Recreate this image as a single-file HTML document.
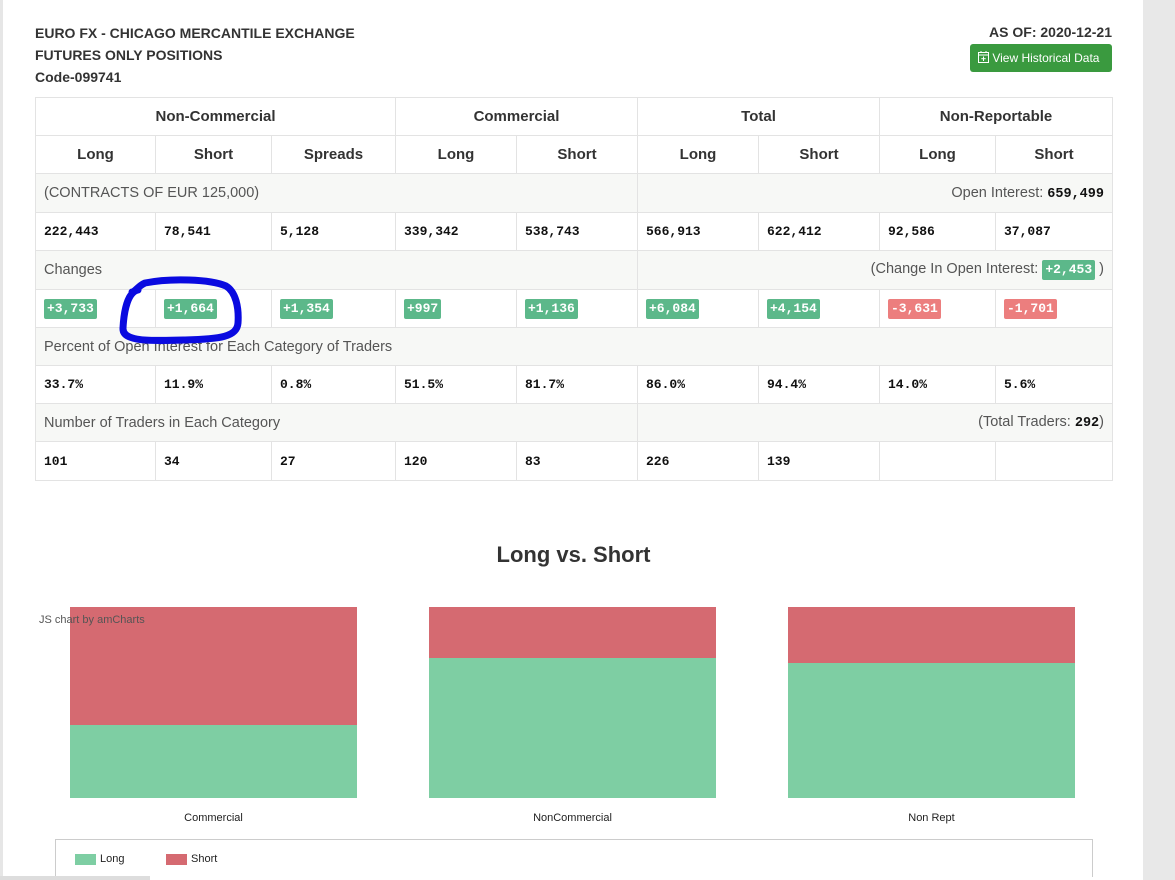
<!DOCTYPE html>
<html><head><meta charset="utf-8"><style>
*{box-sizing:border-box;margin:0;padding:0}
body{width:1175px;height:880px;background:#fff;position:relative;overflow:hidden;font-family:"Liberation Sans",sans-serif;color:#333}
.lstrip{position:absolute;left:0;top:0;width:3px;height:880px;background:#e6e6e6}
.rstrip{position:absolute;left:1143px;top:0;width:32px;height:880px;background:#e8e8e8}
.hdr{position:absolute;left:35px;top:22px;font-weight:bold;font-size:14px;line-height:22px;color:#333}
.asof{position:absolute;right:63px;top:22px;font-weight:bold;font-size:14px;line-height:20px}
.btn{position:absolute;left:970px;top:44px;width:142px;height:28px;background:#3a9a3f;border-radius:3px;color:#fff;font-size:12px;line-height:28px;padding-left:8px}
table{position:absolute;left:35px;top:97px;border-collapse:collapse;table-layout:fixed;width:1078px}
td,th{border:1px solid #e3e3e3;font-size:15px}
th{font-weight:bold;text-align:center;color:#333}
tr.h1{height:38px}tr.h2{height:38px}
tr.g{background:#f7f8f6}
tr.g td{color:#555;padding:0 8px;font-size:14.5px}
tr.n td{font-family:"Liberation Mono",monospace;font-weight:bold;font-size:13px;color:#111;padding-left:8px}
.b{display:inline-block;color:#fff;font-family:"Liberation Mono",monospace;font-weight:bold;font-size:13px;padding:0 3px;line-height:20px;border-radius:2px}
.gr{background:#5cb88a}.rd{background:#ec7e7e}
.r{text-align:right}
.mono{font-family:"Liberation Mono",monospace;font-weight:bold;color:#111;font-size:13.5px}
.title{position:absolute;left:0;width:1147px;top:542px;text-align:center;font-size:22px;font-weight:bold;color:#333}
.bar{position:absolute;width:287px}
.lbl{position:absolute;top:812px;font-size:11px;color:#222;width:287px;text-align:center}
</style></head><body>
<div class="lstrip"></div><div class="rstrip"></div>
<div class="hdr">EURO FX - CHICAGO MERCANTILE EXCHANGE<br>FUTURES ONLY POSITIONS<br>Code-099741</div>
<div class="asof">AS OF: 2020-12-21</div>
<div class="btn"><svg width="11" height="12" viewBox="0 0 11 12" style="vertical-align:-1px"><rect x="0.5" y="1.5" width="10" height="10" fill="none" stroke="#fff"/><line x1="0.5" y1="4" x2="10.5" y2="4" stroke="#fff"/><line x1="3" y1="0" x2="3" y2="2" stroke="#fff"/><line x1="8" y1="0" x2="8" y2="2" stroke="#fff"/><line x1="5.5" y1="5.5" x2="5.5" y2="10" stroke="#fff"/><line x1="3.3" y1="7.7" x2="7.7" y2="7.7" stroke="#fff"/></svg> View Historical Data</div>
<table>
<colgroup><col style="width:120px"><col style="width:116px"><col style="width:124px"><col style="width:121px"><col style="width:121px"><col style="width:121px"><col style="width:121px"><col style="width:116px"><col style="width:117px"></colgroup>
<tr class="h1"><th colspan="3">Non-Commercial</th><th colspan="2">Commercial</th><th colspan="2">Total</th><th colspan="2">Non-Reportable</th></tr>
<tr class="h2"><th>Long</th><th>Short</th><th>Spreads</th><th>Long</th><th>Short</th><th>Long</th><th>Short</th><th>Long</th><th>Short</th></tr>
<tr class="g" style="height:39px"><td colspan="5">(CONTRACTS OF EUR 125,000)</td><td colspan="4" class="r">Open Interest: <span class="mono">659,499</span></td></tr>
<tr class="n" style="height:38px"><td>222,443</td><td>78,541</td><td>5,128</td><td>339,342</td><td>538,743</td><td>566,913</td><td>622,412</td><td>92,586</td><td>37,087</td></tr>
<tr class="g" style="height:39px"><td colspan="5">Changes</td><td colspan="4" class="r">(Change In Open Interest: <span class="b gr">+2,453</span> )</td></tr>
<tr class="n" style="height:38px"><td><span class="b gr">+3,733</span></td><td><span class="b gr">+1,664</span></td><td><span class="b gr">+1,354</span></td><td><span class="b gr">+997</span></td><td><span class="b gr">+1,136</span></td><td><span class="b gr">+6,084</span></td><td><span class="b gr">+4,154</span></td><td><span class="b rd">-3,631</span></td><td><span class="b rd">-1,701</span></td></tr>
<tr class="g" style="height:38px"><td colspan="9">Percent of Open Interest for Each Category of Traders</td></tr>
<tr class="n" style="height:38px"><td>33.7%</td><td>11.9%</td><td>0.8%</td><td>51.5%</td><td>81.7%</td><td>86.0%</td><td>94.4%</td><td>14.0%</td><td>5.6%</td></tr>
<tr class="g" style="height:38px"><td colspan="5">Number of Traders in Each Category</td><td colspan="4" class="r">(Total Traders: <span class="mono">292</span>)</td></tr>
<tr class="n" style="height:39px"><td>101</td><td>34</td><td>27</td><td>120</td><td>83</td><td>226</td><td>139</td><td></td><td></td></tr>
</table>
<svg style="position:absolute;left:0;top:0" width="1175" height="880"><path d="M138 290 C128 292 124 310 123 328 C122 342 150 341 185 340 C220 339 237 337 238 323 C239 308 236 292 226 286 C210 279 170 278 145 283 C138 286 135 292 132 292" fill="none" stroke="#0a0ae0" stroke-width="7" stroke-linecap="round" stroke-linejoin="round"/></svg>
<div class="title">Long vs. Short</div>
<div class="bar" style="left:70px;top:607px;height:118px;background:#d56a71"></div>
<div class="bar" style="left:70px;top:725px;height:73px;background:#7ecea3"></div>
<div class="bar" style="left:429px;top:607px;height:51px;background:#d56a71"></div>
<div class="bar" style="left:429px;top:658px;height:140px;background:#7ecea3"></div>
<div class="bar" style="left:788px;top:607px;height:56px;background:#d56a71"></div>
<div class="bar" style="left:788px;top:663px;height:135px;background:#7ecea3"></div>
<div style="position:absolute;left:39px;top:614px;font-size:11px;color:#555">JS chart by amCharts</div>
<div class="lbl" style="left:70px">Commercial</div>
<div class="lbl" style="left:429px">NonCommercial</div>
<div class="lbl" style="left:788px">Non Rept</div>
<div style="position:absolute;left:55px;top:839px;width:1038px;height:38px;border:1px solid #ccc;border-bottom:none"></div>
<div style="position:absolute;left:75px;top:854px;width:21px;height:11px;background:#7ecea3"></div>
<div style="position:absolute;left:100px;top:853px;font-size:11px;color:#222">Long</div>
<div style="position:absolute;left:166px;top:854px;width:21px;height:11px;background:#d56a71"></div>
<div style="position:absolute;left:191px;top:853px;font-size:11px;color:#222">Short</div>
<div style="position:absolute;left:0;top:876px;width:150px;height:4px;background:#ddd"></div>
</body></html>
